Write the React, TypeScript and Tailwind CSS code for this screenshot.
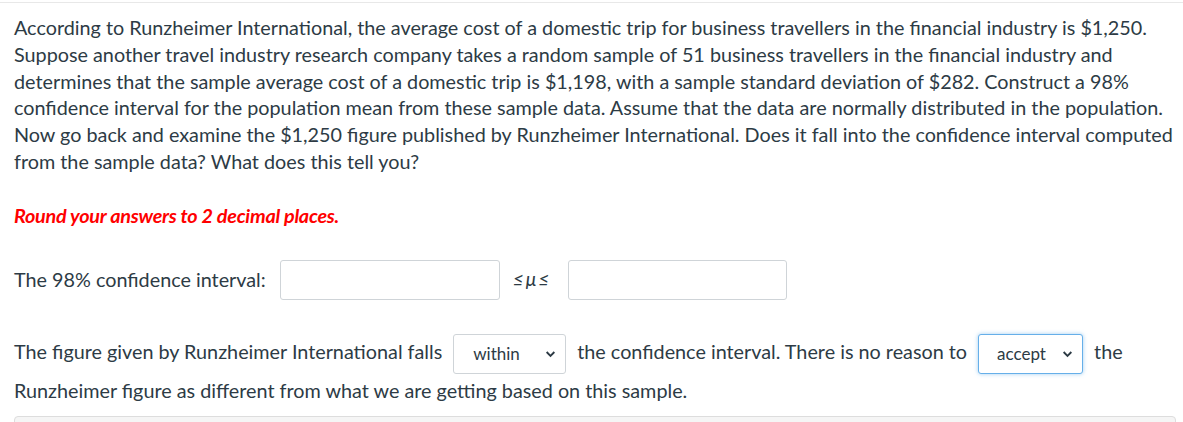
import React from "react";

function Chevron() {
  return (
    <svg width="11" height="11" viewBox="0 0 10 10" className="absolute right-[9px] top-1/2 -translate-y-1/2">
      <path d="M1.5 3.2 L5 6.7 L8.5 3.2" fill="none" stroke="#2d3b45" strokeWidth="1.7" />
    </svg>
  );
}

export default function App() {
  return (
    <div className="w-[1183px] h-[422px] overflow-hidden bg-white" style={{ fontFamily: "Lato, 'Liberation Sans', sans-serif" }}>
      <div className="h-[2px]" />
      <div className="h-px bg-[#e8e8e8]" />
      <div className="pl-[14px] pr-[7px] text-[19.8px] leading-[26.8px] text-[#2d3b45]">
        <p className="pt-[11px]">
          According to Runzheimer International, the average cost of a domestic trip for business travellers in the financial industry is $1,250. Suppose another travel industry research company takes a random sample of 51 business travellers in the financial industry and determines that the sample average cost of a domestic trip is $1,198, with a sample standard deviation of $282. Construct a 98% confidence interval for the population mean from these sample data. Assume that the data are normally distributed in the population. Now go back and examine the $1,250 figure published by Runzheimer International. Does it fall into the confidence interval computed from the sample data? What does this tell you?
        </p>
        <p className="mt-[27px] font-bold italic text-[#ff0000] tracking-[-0.25px]">Round your answers to 2 decimal places.</p>
        <div className="mt-[31px] flex items-center h-[40px]">
          <span>The 98% confidence interval:</span>
          <div className="ml-[14px] w-[220px] h-[40px] border border-[#cfd4d8] rounded-[3px] bg-white" />
          <span className="ml-[13px] w-[42px] text-[19px] italic text-[#2d3b45]">≤<span className="mx-[2px]">μ</span>≤</span>
          <div className="ml-[13px] w-[219px] h-[40px] border border-[#cfd4d8] rounded-[3px] bg-white" />
        </div>
        <div className="mt-[33px] leading-[37px]">
          The figure given by Runzheimer International falls
          <span className="relative inline-block align-middle my-[-2px] ml-[11px] mr-[11px] w-[113px] h-[40px] border border-[#cfd4d8] rounded-[3px] bg-white text-[17px] leading-[38px] pl-[19px]">
            within
            <Chevron />
          </span>
          the confidence interval. There is no reason to
          <span className="relative inline-block align-middle my-[-2px] ml-[11px] mr-[11px] w-[105px] h-[40px] border border-[#66afe9] shadow-[0_0_4px_rgba(102,175,233,0.6)] rounded-[3px] bg-white text-[17px] leading-[38px] pl-[18px]">
            accept
            <Chevron />
          </span>
          the Runzheimer figure as different from what we are getting based on this sample.
        </div>
        <div className="mt-[7px] h-[40px] border border-[#dddddd] rounded-[4px] bg-[#f5f5f5]" />
      </div>
    </div>
  );
}
